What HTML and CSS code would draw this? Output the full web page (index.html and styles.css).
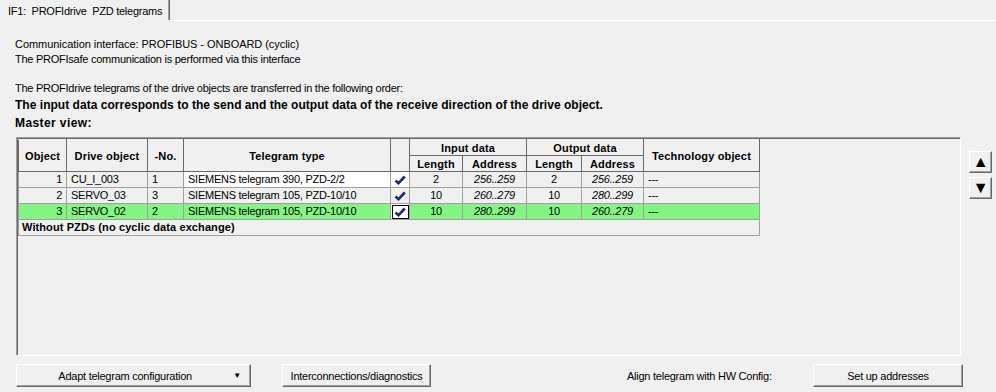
FILE: index.html
```html
<!DOCTYPE html>
<html lang="en">
<head>
  <meta charset="UTF-8" />
  <title>IF1: PROFIdrive PZD telegrams</title>
  <link rel="stylesheet" href="styles.css">
</head>
<body>
  <div class="tabstrip">
    <div class="tab">IF1:&nbsp; PROFIdrive&nbsp; PZD telegrams</div>
    <div class="tabline"></div>
  </div>

  <div class="page">
    <div class="info">
      <p class="caps">Communication interface: PROFIBUS - ONBOARD (cyclic)</p>
      <p>The PROFIsafe communication is performed via this interface</p>
    </div>

    <div class="order">
      <p>The PROFIdrive telegrams of the drive objects are transferred in the following order:</p>
      <p class="strong lead">The input data corresponds to the send and the output data of the receive direction of the drive object.</p>
      <p class="strong master">Master view:</p>
    </div>

    <div class="grid-row">
      <div class="grid-box">
        <table class="grid">
          <colgroup>
            <col style="width:48px"><col style="width:81px"><col style="width:36px">
            <col style="width:207px"><col style="width:19px"><col style="width:53px">
            <col style="width:64px"><col style="width:55px"><col style="width:62px">
            <col style="width:116px">
          </colgroup>
          <thead>
            <tr class="h1">
              <th rowspan="2">Object</th>
              <th rowspan="2">Drive object</th>
              <th rowspan="2">-No.</th>
              <th rowspan="2">Telegram type</th>
              <th rowspan="2"></th>
              <th colspan="2">Input data</th>
              <th colspan="2">Output data</th>
              <th rowspan="2">Technology object</th>
            </tr>
            <tr class="h2">
              <th>Length</th><th>Address</th><th>Length</th><th>Address</th>
            </tr>
          </thead>
          <tbody>
            <tr>
              <td class="num">1</td>
              <td>CU_I_003</td>
              <td>1</td>
              <td class="edit">SIEMENS telegram 390, PZD-2/2</td>
              <td class="check edit"><svg viewBox="0 0 12 10" width="12" height="10"><path d="M1.5 5.5 L4.5 8.2 L10.8 1.5" /></svg></td>
              <td class="mid">2</td>
              <td class="mid addr">256..259</td>
              <td class="mid">2</td>
              <td class="mid addr">256..259</td>
              <td>---</td>
            </tr>
            <tr>
              <td class="num">2</td>
              <td>SERVO_03</td>
              <td>3</td>
              <td>SIEMENS telegram 105, PZD-10/10</td>
              <td class="check"><svg viewBox="0 0 12 10" width="12" height="10"><path d="M1.5 5.5 L4.5 8.2 L10.8 1.5" /></svg></td>
              <td class="mid">10</td>
              <td class="mid addr">260..279</td>
              <td class="mid">10</td>
              <td class="mid addr">280..299</td>
              <td>---</td>
            </tr>
            <tr class="selected">
              <td class="num">3</td>
              <td>SERVO_02</td>
              <td>2</td>
              <td>SIEMENS telegram 105, PZD-10/10</td>
              <td class="check focus"><svg viewBox="0 0 12 10" width="12" height="10"><path d="M1.5 5.5 L4.5 8.2 L10.8 1.5" /></svg></td>
              <td class="mid">10</td>
              <td class="mid addr">280..299</td>
              <td class="mid">10</td>
              <td class="mid addr">260..279</td>
              <td>---</td>
            </tr>
            <tr class="nopzd">
              <td colspan="10">Without PZDs (no cyclic data exchange)</td>
            </tr>
          </tbody>
        </table>
      </div>

      <div class="movers">
        <button class="win-btn mover">&#9650;</button>
        <button class="win-btn mover">&#9660;</button>
      </div>
    </div>

    <div class="actions">
      <button class="win-btn adapt"><span class="label">Adapt telegram configuration</span><span class="drop">&#9660;</span></button>
      <button class="win-btn diag">Interconnections/diagnostics</button>
      <span class="align">Align telegram with HW Config:</span>
      <button class="win-btn setup">Set up addresses</button>
    </div>
  </div>
</body>
</html>
```

FILE: styles.css
```css
:root {
  --face: #f0f0f0;
  --shadow: #a0a0a0;
  --dark: #696969;
  --line: #a0a0a0;
  --green: #84f584;
  --check: #1c2a6e;
  --font: "Liberation Sans", Arial, sans-serif;
}

body {
  margin: 0;
  background: var(--face);
  font-family: var(--font);
  font-size: 11px;
  letter-spacing: -0.25px;
  color: #000;
  width: 996px;
  height: 392px;
  overflow: hidden;
}

p {
  margin: 0;
}

.tabstrip {
  display: flex;
  height: 21px;
}

.tab {
  width: 161px;
  height: 20px;
  padding-left: 8px;
  line-height: 22px;
  border-right: 1px solid var(--dark);
  box-shadow: inset -1px 0 0 var(--shadow);
  white-space: nowrap;
}

.tabline {
  flex: 1;
  height: 20px;
  border-bottom: 1px solid #fff;
}

.page {
  padding-left: 15px;
}

.info {
  margin-top: 16px;
  line-height: 15px;
}

.caps {
  letter-spacing: -0.05px;
}

.order {
  margin-top: 14px;
  line-height: 15px;
}

.strong {
  font-weight: bold;
  font-size: 12px;
  height: 18px;
  line-height: 18px;
}

.lead {
  letter-spacing: 0.03px;
}

.master {
  letter-spacing: 0.4px;
}

.grid-row {
  display: flex;
  margin-top: 5px;
}

.grid-box {
  width: 942px;
  height: 216px;
  margin-left: 1px;
  border: 1px solid;
  border-color: var(--shadow) #fff #fff var(--shadow);
  box-shadow: inset 1px 1px 0 var(--dark);
  padding: 1px 0 0 1px;
  box-sizing: content-box;
}

.grid {
  border-collapse: collapse;
  table-layout: fixed;
  width: 742px;
}

.grid th,
.grid td {
  padding: 0 4px;
  white-space: nowrap;
  overflow: hidden;
}

.grid th {
  font-weight: bold;
  letter-spacing: 0.15px;
  text-align: center;
  background: var(--face);
  border: 1px solid var(--dark);
  border-top-color: var(--face);
}

.grid .h1 th,
.grid .h2 th {
  height: 15px;
}

.grid td {
  height: 15px;
  line-height: 15px;
  background: var(--face);
  border: 1px solid var(--line);
}

.grid td.edit {
  background: #fff;
}

.grid td.num {
  text-align: right;
}

.grid td.mid {
  text-align: center;
}

.grid td.addr {
  font-style: italic;
}

.grid td.check {
  padding: 0;
  text-align: center;
}

.check svg {
  display: block;
  margin: 0 auto;
  fill: none;
  stroke: var(--check);
  stroke-width: 2.6;
}

.grid .selected td {
  background: var(--green);
}

.grid .selected td.focus {
  background: #fff;
  outline: 1px solid #000;
  outline-offset: -2px;
}

.grid .nopzd td {
  font-weight: bold;
  letter-spacing: 0.1px;
  text-align: left;
  padding-left: 3px;
}

.movers {
  display: flex;
  flex-direction: column;
  gap: 4px;
  margin-top: 14px;
  margin-left: 8px;
}

.win-btn {
  font-family: var(--font);
  font-size: 11px;
  letter-spacing: -0.25px;
  color: #000;
  background: var(--face);
  border: 1px solid;
  border-color: #fff var(--dark) var(--dark) #fff;
  box-shadow: inset -1px -1px 0 var(--shadow);
  padding: 0;
  cursor: pointer;
}

.mover {
  width: 23px;
  height: 22px;
  font-size: 16px;
  line-height: 20px;
}

.actions {
  display: flex;
  align-items: center;
  margin-top: 8px;
  height: 23px;
}

.actions .win-btn {
  height: 23px;
}

.adapt {
  display: flex;
  align-items: center;
  width: 235px;
  margin-left: 1px;
}

.adapt .label {
  flex: 1;
  text-align: center;
}

.adapt .drop {
  font-size: 8px;
  padding-right: 9px;
}

.diag {
  width: 149px;
  margin-left: 31px;
}

.align {
  width: 186px;
  margin-left: 196px;
  white-space: nowrap;
}

.setup {
  width: 150px;
}
```
